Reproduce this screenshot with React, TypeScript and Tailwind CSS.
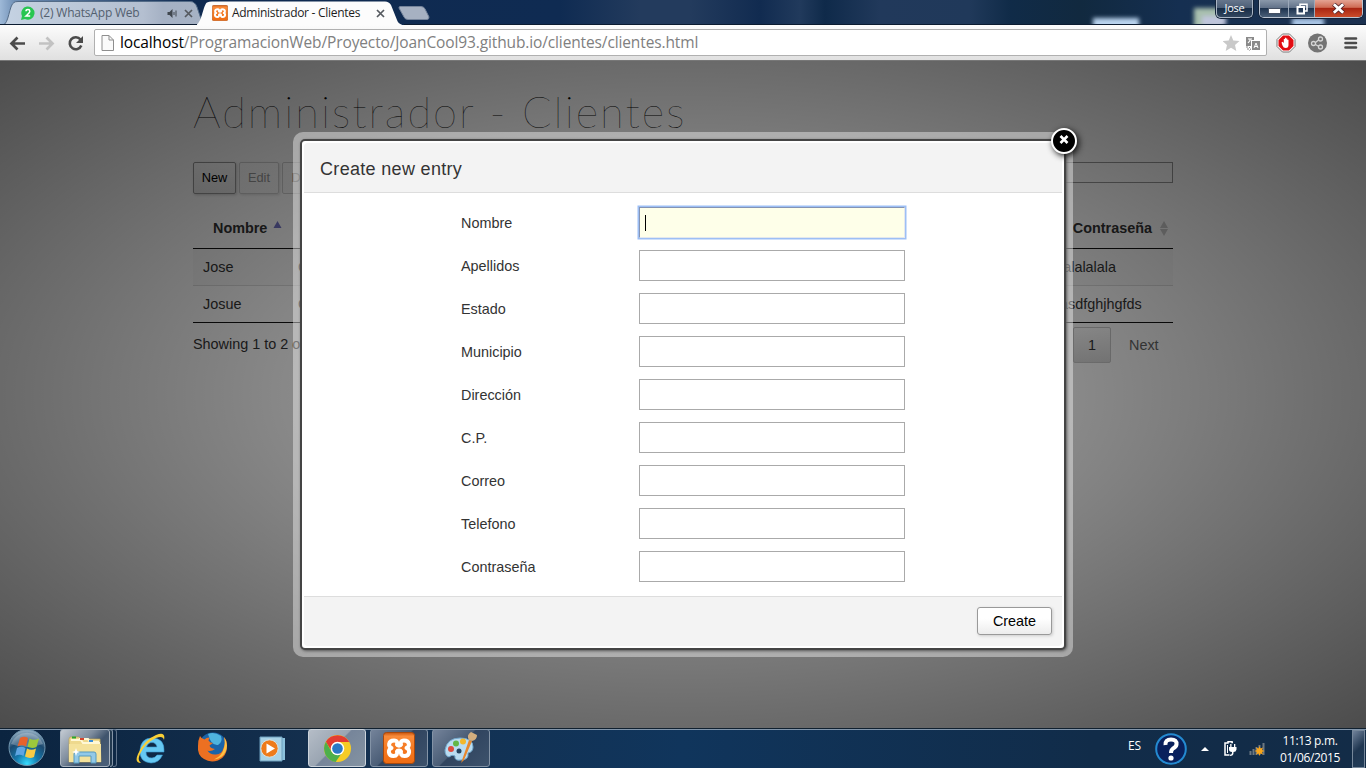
import React from "react";

const fields = ["Nombre", "Apellidos", "Estado", "Municipio", "Dirección", "C.P.", "Correo", "Telefono", "Contraseña"];

function XamppIcon({ className }: { className: string }) {
  return (
    <svg viewBox="0 0 32 32" className={className}>
      <defs>
        <linearGradient id="xo" x1="0" y1="0" x2="0" y2="1">
          <stop offset="0" stopColor="#c9540d" />
          <stop offset=".12" stopColor="#f98b3a" />
          <stop offset=".5" stopColor="#f57a22" />
          <stop offset="1" stopColor="#ee6c13" />
        </linearGradient>
      </defs>
      <rect x=".5" y=".5" width="31" height="31" rx="3" fill="url(#xo)" stroke="#a8480c" />
      <path
        d="M11 8.500C5 8.500 5 15 8.500 16C4.500 17 5 24 10.500 24C14 24 14.500 21.500 14 19.500C14.500 18 17.500 18 18 19.500C17.500 21.500 18 24 21.500 24C27 24 27.500 17 23.500 16C27 15 27 8.500 21 8.500C17.500 8.500 17.500 11 18 12.800C17.500 14 14.500 14 14 12.800C14.500 11 14.500 8.500 11 8.500z"
        fill="none"
        stroke="#fff"
        strokeWidth="4"
        strokeLinejoin="round"
      />
    </svg>
  );
}

function CloseMark() {
  return (
    <svg viewBox="0 0 9 9" className="h-[9px] w-[9px] shrink-0">
      <path d="M1 1l7 7M8 1l-7 7" stroke="#55595f" strokeWidth="1.700" />
    </svg>
  );
}

function TabStrip() {
  return (
    <div className="relative flex h-[25px] w-full shrink-0 overflow-hidden bg-[linear-gradient(90deg,#9eb9d8_0,#6f8fb5_15px,#0f2a50_190px,#0f2b52_560px,#233b5d_640px,#233b5d_690px,#112b50_760px,#213a5c_800px,#0f2a4a_825px,#21395b_880px,#20395a_970px,#102b48_1010px,#11293f_1080px,#152f51_1180px,#1c3150_1366px)]">
      <svg className="absolute inset-0 h-[25px] w-[1366px]" viewBox="0 0 1366 25">
        <defs>
          <filter id="glow" x="-30%" y="-80%" width="160%" height="260%">
            <feGaussianBlur stdDeviation="2.200" />
          </filter>
          <linearGradient id="inactive" x1="0" x2="1">
            <stop offset="0" stopColor="#c5d3e4" />
            <stop offset=".1" stopColor="#c2cfdf" />
            <stop offset=".7" stopColor="#b4bfd0" />
            <stop offset=".8" stopColor="#a5b1c4" />
            <stop offset="1" stopColor="#a6b2c4" />
          </linearGradient>
        </defs>
        <g filter="url(#glow)">
          <rect x="1093" y="18" width="46" height="12" fill="#b9d3ee" />
          <rect x="1194" y="8" width="28" height="20" fill="#a8bfae" />
          <rect x="1202" y="16" width="24" height="10" fill="#bfc5dc" />
          <rect x="1292" y="18" width="32" height="10" fill="#a9c5e5" />
        </g>
        <path d="M3 25C9 24 9 5 14 2.500Q15 1.500 18 1.500H190Q195 1.500 197 7L203 25z" fill="url(#inactive)" stroke="#536b87" />
        <path d="M195 25.500C202 24 203 5 207 2.500Q209 1.500 212 1.500H385Q389 1.500 391 5L397 20Q398 24 404 25.500z" fill="#fcfcfc" />
        <path d="M400 6.500H421Q424 6.500 425 9L429 17Q429 19.500 427 19.500H408Q405 19.500 404 17L399 8Q399 6.500 400 6.500z" fill="#a6b1c2" stroke="#75849b" />
        <path d="M0 24.500H197M404 24.500H1366" stroke="#0c1c31" />
      </svg>
      <div className="relative flex w-[201px] items-center pt-px pl-[21px] text-[12px] text-[#53606f]">
        <svg viewBox="0 0 14 14" className="h-[14px] w-[14px]">
          <path d="M0 14l1-4A6.600 6.600 0 1 1 4 13z" fill="#27c650" />
          <path d="M5 5.200Q5 3.600 7 3.600Q8.800 3.600 8.800 5.200Q8.800 6.500 5 10H9.200" fill="none" stroke="#fff" strokeWidth="1.500" />
        </svg>
        <span className="ml-[5px] w-[127px] whitespace-nowrap tracking-[-0.200px]">(2) WhatsApp Web</span>
        <svg viewBox="0 0 10 9" className="h-[9px] w-[11px]">
          <path d="M0 3h2l3-3v9L2 6H0z" fill="#40474f" />
          <path d="M6.500 3v3M8.500 1.500v6" stroke="#40474f" />
        </svg>
        <span className="ml-[6px] flex"><CloseMark /></span>
      </div>
      <div className="relative flex w-[195px] items-center pt-px pl-[11px] text-[12px] text-[#1c1c1c]">
        <XamppIcon className="h-4 w-4" />
        <span className="ml-1 w-[144px] whitespace-nowrap tracking-[-0.290px]">Administrador - Clientes</span>
        <CloseMark />
      </div>
      <div className="relative ml-auto flex h-[18px] text-white">
        <div className="mr-[6px] flex h-[18px] w-[37px] items-center justify-center rounded-b-[5px] border border-t-0 border-[#aab5c4] bg-[linear-gradient(#66768c_0,#4d5f77_45%,#172c46_50%,#33475f)] text-[11px] font-medium tracking-[-0.200px] shadow-[0_0_0_1px_#13233a]">Jose</div>
        <div className="mr-[3px] flex h-[18px] w-[104px] overflow-hidden rounded-b-[5px] border border-t-0 border-[#bbc4d1] shadow-[0_0_0_1px_#13233a]">
          <div className="flex w-[29px] items-center justify-center border-r border-[#9ba8b9] bg-[linear-gradient(#8a98aa_0,#63738a_45%,#1e334f_50%,#4a5f78)]">
            <div className="mt-1 h-1 w-[11px] bg-white shadow-[0_0_0_1px_#465164]" />
          </div>
          <div className="flex w-[26px] items-center justify-center border-r border-[#9ba8b9] bg-[linear-gradient(#8a98aa_0,#63738a_45%,#1e334f_50%,#4a5f78)]">
            <svg viewBox="0 0 12 12" className="h-3 w-3">
              <path d="M4 3V1.200H11V8H9" fill="none" stroke="#fff" strokeWidth="1.500" />
              <path d="M1.500 4H8V10.500H1.500z" fill="none" stroke="#fff" strokeWidth="2" />
            </svg>
          </div>
          <div className="flex flex-1 items-center justify-center bg-[linear-gradient(#e4a393_0,#cf6c55_43%,#a92612_50%,#c94c2a)]">
            <svg viewBox="0 0 12 10" className="h-[11px] w-[13px]">
              <path d="M1.500 1l9 8M10.500 1l-9 8" stroke="#52252a" strokeWidth="4.200" />
              <path d="M1.700 1l8.600 8M10.300 1L1.700 9" stroke="#fff" strokeWidth="2.600" />
            </svg>
          </div>
        </div>
      </div>
    </div>
  );
}

function Toolbar() {
  return (
    <div className="flex h-9 w-full shrink-0 items-center border-b border-[#777] bg-[linear-gradient(#fcfcfc,#e0e0e0)]">
      <svg viewBox="0 0 94 34" className="h-[34px] w-[94px] shrink-0">
        <path d="M25 17.500H12M17.500 11.500L11.500 17.500L17.500 23.500" fill="none" stroke="#4b4b4b" strokeWidth="2.700" />
        <path d="M39 17.500H52M46.500 11.500L52.500 17.500L46.500 23.500" fill="none" stroke="#c2c2c2" strokeWidth="2.700" />
        <path d="M80.500 13.500A6 6 0 1 0 81.300 19.500" fill="none" stroke="#4b4b4b" strokeWidth="2.600" />
        <path d="M83 10V17H76z" fill="#4b4b4b" />
      </svg>
      <div className="flex h-[27px] w-[1173px] items-center rounded-[2px] border border-[#b0b0b0] bg-white pl-[6px]">
        <svg viewBox="0 0 13 16" className="h-4 w-[13px]">
          <path d="M1 .5H8L12.500 5V15.500H1z" fill="#fafafa" stroke="#8e8e8e" />
          <path d="M8 .5V5H12.500" fill="none" stroke="#8e8e8e" />
        </svg>
        <span className="ml-[6px] whitespace-nowrap pt-px text-[15.500px] tracking-[-0.125px] text-[#808080]"><span className="text-black">localhost</span>/ProgramacionWeb/Proyecto/JoanCool93.github.io/clientes/clientes.html</span>
        <svg viewBox="0 0 38 18" className="mr-[5px] ml-auto h-[18px] w-[38px]">
          <path d="M8 1L10.300 6.400L16.500 7L12 11L13.300 17L8 13.800L2.700 17L4 11L-.5 7L5.700 6.400z" fill="#c9c9c9" />
          <path d="M23 3H31V6H28V12H23z" fill="#8a8a8a" />
          <path d="M25 5h4M27 4.500v2L25 9" stroke="#fff" strokeWidth="1.200" fill="none" />
          <rect x="29" y="7" width="8" height="9" fill="#8a8a8a" />
          <path d="M31 14l2-5l2 5M31.500 12.500h3" stroke="#fff" fill="none" />
          <path d="M24 12v3h3M26 13l2 2l-2 2" stroke="#8a8a8a" strokeDasharray="2 1" fill="none" />
        </svg>
      </div>
      <svg viewBox="0 0 98 34" className="h-[34px] w-[98px] shrink-0">
        <path d="M15.500 8H22.500L28 13.500V20.500L22.500 26H15.500L10 20.500V13.500z" fill="#fff" stroke="#777" />
        <path d="M16 9.500H22L26.500 14V20L22 24.500H16L11.500 20V14z" fill="#e20c12" />
        <path d="M14.500 16.500l1-.8l1.300 1.300V13h1.100v3V11.800h1.200V16v-3.600h1.200V16.500v-2.800h1.200V19q0 3-2.700 3q-2.500 0-3.300-2.500z" fill="#fff" />
        <circle cx="50.500" cy="17" r="9.500" fill="#747474" />
        <g fill="none" stroke="#d6d6d6" strokeWidth="1.300">
          <circle cx="46.500" cy="17.500" r="2" />
          <circle cx="53.500" cy="13" r="2" />
          <circle cx="53.500" cy="21" r="2" />
          <path d="M48.500 16.500l3-2.500M48.500 18.500l3 1.800" />
        </g>
        <path d="M78.500 12.500H89M78.500 17H89M78.500 21.500H89" stroke="#4b4b4b" strokeWidth="2.600" strokeLinecap="round" />
      </svg>
    </div>
  );
}

function Row({ name, last, pass, striped }: { name: string; last: string; pass: string; striped?: boolean }) {
  return (
    <div className={striped ? "flex h-9 items-center bg-[#f9f9f9] pt-px pl-[10px]" : "flex h-9 items-center pt-px pl-[10px]"}>
      <span className="w-[95px]">{name}</span>
      <span className="w-[762px]">{last}</span>
      <span>{pass}</span>
    </div>
  );
}

function ClientsPage() {
  return (
    <div className="mx-auto w-[980px] pt-[23px] text-[14.400px] text-[#333]">
      <h1 className="h-[78px] font-[Lato] text-[43.500px] leading-[54px] font-thin whitespace-nowrap tracking-[2px] text-black">Administrador - Clientes</h1>
      <div className="flex h-8 items-start justify-between">
        <div className="flex gap-[3px] text-[12.800px]">
          <button className="h-8 w-[43px] rounded-[2px] border border-[#999] bg-[linear-gradient(#fff,#e9e9e9)] pb-px text-black shadow-[1px_1px_3px_#ccc]">New</button>
          <button className="h-8 w-[40px] rounded-[2px] border border-[#d0d0d0] bg-[linear-gradient(#fff,#f9f9f9)] pb-px text-[#999] shadow-[1px_1px_3px_#ddd]">Edit</button>
          <button className="h-8 w-[56px] rounded-[2px] border border-[#d0d0d0] bg-[linear-gradient(#fff,#f9f9f9)] pb-px text-[#999]">Delete</button>
        </div>
        <div className="h-[21px] w-[173px] border border-[#999]" />
      </div>
      <div className="mt-[14px] flex h-[41px] items-center border-b border-[#111] pt-px pl-5 font-bold">
        <span>Nombre</span>
        <svg viewBox="0 0 8 7" className="mb-[8px] ml-[6px] h-[7px] w-[9px]"><path d="M4 0l4 7H0z" fill="#7777c9" /></svg>
        <span className="ml-auto">Contraseña</span>
        <svg viewBox="0 0 8 15" className="mr-[5px] ml-[8px] h-[15px] w-2"><path d="M4 0l4 7H0zM0 8h8l-4 7z" fill="#ccc" /></svg>
      </div>
      <div className="border-b border-[#111]">
        <Row name="Jose" last="Garcia" pass="lalalalala" striped />
        <div className="border-t border-[#ddd]"><Row name="Josue" last="Gomez" pass="asdfghjhgfds" /></div>
      </div>
      <div className="flex justify-between pt-1">
        <span className="pt-[7px]">Showing 1 to 2 of 2 entries</span>
        <div className="flex h-9">
          <span className="flex w-[38px] items-center justify-center rounded-[2px] border border-[#cacaca] bg-[linear-gradient(#fff,#dcdcdc)] pt-px">1</span>
          <span className="flex w-[62px] items-center pt-px pl-[18px] text-[#666]">Next</span>
        </div>
      </div>
    </div>
  );
}

function EntryDialog() {
  return (
    <div className="absolute top-[71px] left-[293px] w-[780px] rounded-[10px] bg-white/40 p-[7px]">
      <div className="relative flex h-[511px] flex-col rounded-[5px] border-2 border-[#444] bg-white p-[2px] shadow-[1px_1px_3px_#555]">
        <header className="flex h-[50px] shrink-0 items-center rounded-t-[4px] border-b border-[#ddd] bg-[#f3f3f3] pt-[3px] pl-[16px] text-[18px] tracking-[0.320px] text-[#333]">Create new entry</header>
        <div className="flex flex-1 flex-col gap-3 pt-[14px] pl-[157px]">
          {fields.map((f, i) => (
            <label key={f} className="flex h-[31px] items-center text-[14.400px] text-[#333]">
              <span className="w-[178px] pt-[2px]">{f}</span>
              {i === 0 ? (
                <span className="flex h-[31px] w-[266px] items-center border border-[#e4e8ec] border-t-[#8494b4] border-l-[#8494b4] bg-[#feffe9] pl-[5px] shadow-[0_0_0_1.500px_#9dbff5]"><i className="h-[16px] w-px bg-black" /></span>
              ) : (
                <span className="h-[31px] w-[266px] border border-[#aaa] bg-white" />
              )}
            </label>
          ))}
        </div>
        <footer className="flex h-[50px] shrink-0 items-start justify-end rounded-b-[4px] border-t border-[#ddd] bg-[#f3f3f3] pt-[10px] pr-[10px]">
          <button className="h-7 w-[75px] rounded-[3px] border border-[#999] bg-[linear-gradient(#fff_40%,#ececec)] pt-px text-[14.400px] text-black shadow-[1px_1px_3px_#ccc]">Create</button>
        </footer>
        <div className="absolute top-[-13px] right-[-13px] flex h-[26px] w-[26px] justify-center rounded-full border-2 border-white bg-black pt-[5px] shadow-[2px_2px_6px_#111]">
          <svg viewBox="0 0 10 9" className="h-[9px] w-[10px]"><path d="M1.500 1l7 7M8.500 1l-7 7" stroke="#fff" strokeWidth="2.600" /></svg>
        </div>
      </div>
    </div>
  );
}

function Slot({ children, bright }: { children: React.ReactNode; bright?: boolean }) {
  return (
    <div className={bright
      ? "flex h-[38px] w-[58px] items-center justify-center rounded-[3px] border border-[#cbd3db] bg-[linear-gradient(135deg,#b5bdc7_0,#9aa5b2_45%,#76859a_47%,#8493a2)]"
      : "flex h-[38px] w-[58px] items-center justify-center rounded-[3px] border border-[#8393a6] bg-[linear-gradient(135deg,#74839a_0,#4a5d76_45%,#30445f_47%,#3d526c)]"}>
      {children}
    </div>
  );
}

function StartOrb() {
  return (
    <svg viewBox="0 0 38 38" className="ml-2 h-[38px] w-[38px]">
      <defs>
        <radialGradient id="orb" cx=".5" cy=".95" r=".9"><stop offset="0" stopColor="#36dcff" /><stop offset=".35" stopColor="#1479ad" /><stop offset=".7" stopColor="#1d4a70" /><stop offset="1" stopColor="#8aa7bd" /></radialGradient>
      </defs>
      <circle cx="19" cy="18.500" r="18" fill="url(#orb)" stroke="#6f94ad" />
      <path d="M3 15A17 17 0 0 1 35 15Q19 21 3 15z" fill="#fff" opacity=".25" />
      <path d="M12 9Q16 6.500 20 9L18 17.500Q14 15 9.500 17.500z" fill="#e7622c" />
      <path d="M21.500 9.500Q26 12 31 9.500L28.500 18Q24 20 19.500 17.800z" fill="#9cc83c" />
      <path d="M9 19Q13 16.500 17.500 19L15.500 27Q11.500 24.500 7 27z" fill="#5fa5e3" />
      <path d="M19 19.500Q23.500 22 28 19.500L26 28Q21.500 30 17 27.500z" fill="#f8cb45" />
    </svg>
  );
}

function Taskbar() {
  return (
    <div className="flex h-10 w-full shrink-0 border-t border-[#10202f] bg-[linear-gradient(90deg,#0b2440,#14304f_25%,#10355c_50%,#112c49_80%,#132c47)] text-white shadow-[inset_0_1px_0_#8195aa]">
      <StartOrb />
      <div className="ml-[14px] flex">
        <div className="flex h-[38px] w-[50px] items-center justify-center rounded-[3px] border border-[#a9b4c0] bg-[linear-gradient(135deg,#c4cbd3_0,#7f8d9e_40%,#40546d_60%,#4b6079)]">
          <svg viewBox="0 0 34 30" className="mt-[2px] h-[30px] w-[34px]">
            <path d="M1 5l1-2h9l2 2h19l1 23H1z" fill="#eed98d" stroke="#b9a257" strokeWidth=".7" />
            <path d="M3 6h10l2 3h17M11 5h9l2 3h9" stroke="#fff8d5" strokeWidth="2" fill="none" />
            <path d="M4 3.500h4" stroke="#2aa72d" strokeWidth="2" /><path d="M12 5h4" stroke="#d5442c" strokeWidth="2" /><path d="M21 7h4" stroke="#3a8ed8" strokeWidth="2" />
            <path d="M1 10H33V28H1z" fill="#f4e29b" />
            <path d="M6 29V20Q6 18 8 18H26Q28 18 28 20V29H23V22H11V29z" fill="#92c9e8" stroke="#569abd" />
            <path d="M8 14l1 3l3 1l-3 1l-1 3l-1-3l-3-1l3-1z" fill="#fff" />
          </svg>
        </div>
        <div className="h-[38px] w-[3px] rounded-r-[3px] border-y border-r border-[#8494a6] bg-[#22394f]" />
        <div className="h-[38px] w-[4px] rounded-r-[3px] border-y border-r border-[#60738a]" />
      </div>
      <svg viewBox="0 0 34 34" className="mt-[3px] ml-[17px] h-[34px] w-[34px]">
        <path d="M28.500 23Q25 31 17 31Q5 30 6 18Q7 6 18 6Q31 6 30 20H12Q12 26 18 26Q21 26 23 23zM12.500 15H23Q22 10.500 18 10.500Q14 10.500 12.500 15z" fill="#66c8f2" stroke="#3b97cf" strokeWidth=".6" />
        <path d="M7 31Q0 31 4 22Q10 8 22 3Q32-1 30 8Q29 3 22 6Q11 11 6 22Q3 29 7 31z" fill="#f9cf36" />
      </svg>
      <svg viewBox="0 0 32 32" className="mt-[2px] ml-[28px] h-8 w-8">
        <circle cx="17" cy="15.500" r="14" fill="#1a64aa" />
        <path d="M12 3Q18 0 25 5Q27 11 22 14Q15 15 12 3z" fill="#4fb4df" />
        <path d="M4 5Q2 9 2 15Q1 24 8 28Q14 32 22 29.500Q31 26 31 15Q31 9 28 6Q30 12 27.500 17Q26 23 20 23.500Q14 24 11.500 19.500Q15 21 19 18Q14 17 13.500 14.500L17 12Q14 12 12.500 9.500L13.500 6.500Q10 6.500 8.500 8.500Q5.500 8 4 5z" fill="#ec7022" />
        <path d="M28 6Q33 13 29.500 21Q26 28 18 28.500Q26 25 28 17Q29.500 12 28 6z" fill="#fdc343" />
      </svg>
      <svg viewBox="0 0 28 28" className="mt-[6px] ml-[30px] h-7 w-7">
        <path d="M5 3L27 3V25H5z" fill="#8cc1dc" />
        <path d="M2 2H24V26H2z" fill="#a9d3e6" stroke="#6c9fbd" />
        <circle cx="11.500" cy="13.500" r="8.700" fill="#ee7b1a" stroke="#d6e5e9" />
        <path d="M8.500 8.500L17 13.500L8.500 18.500z" fill="#fff" />
      </svg>
      <div className="ml-[22px] flex gap-1">
        <Slot bright>
          <svg viewBox="0 0 30 30" className="h-[29px] w-[29px]">
            <circle cx="15" cy="15" r="14" fill="#f6cc25" />
            <path d="M3 8A14 14 0 0 1 27.200 8.300H15A7 7 0 0 0 8.800 17.500z" fill="#e23c32" />
            <path d="M3 8A14 14 0 0 0 13 28.900L20 19A7 7 0 0 1 9 18.500z" fill="#4daf4b" />
            <circle cx="15" cy="15" r="7" fill="#fff" /><circle cx="15" cy="15" r="5.500" fill="#2a79c6" />
          </svg>
        </Slot>
        <Slot><XamppIcon className="h-8 w-8" /></Slot>
        <Slot>
          <svg viewBox="0 0 34 32" className="h-8 w-[34px]">
            <path d="M1 18Q3 6 16 6Q29 6 29 15Q29 20 24 21Q25 28 17 28Q10 29 11 24Q8 22 5 25Q1 24 1 18z" fill="#b9dcf1" stroke="#73a8cc" />
            <circle cx="7" cy="17" r="3" fill="#de4b3f" /><circle cx="12" cy="11.500" r="3" fill="#63b647" /><circle cx="19" cy="9.500" r="3" fill="#f2b72b" /><circle cx="15" cy="19" r="2.500" fill="#24425f" />
            <path d="M17 31L25 8L28 9L20 28z" fill="#e7862c" />
            <path d="M25 8Q22 3 27 0L33 3Q33 8 28 9z" fill="#d2ad7e" />
          </svg>
        </Slot>
      </div>
      <div className="ml-auto flex items-center text-[12px]">
        <span className="mb-[5px] w-[27px] text-[12px] tracking-[-0.200px]">ES</span>
        <svg viewBox="0 0 32 32" className="h-8 w-8">
          <circle cx="16" cy="16" r="14.800" fill="#09205c" stroke="#248ad1" strokeWidth="2" />
          <path d="M10.500 12Q10 6.500 16 6.500Q22 6.500 21.500 11.500Q21 14 18 15.500Q16 17 16 20" fill="none" stroke="#fff" strokeWidth="4" />
          <circle cx="16" cy="25" r="2.600" fill="#fff" />
        </svg>
        <svg viewBox="0 0 8 4" className="ml-[14px] h-1 w-2"><path d="M4 0l4 4H0z" fill="#fff" /></svg>
        <svg viewBox="0 0 14 16" className="ml-[14px] h-4 w-[14px]">
          <path d="M10 1.500H9V.8H5V2H2V14H6.500" fill="none" stroke="#fff" strokeWidth="1.500" />
          <path d="M4.500 4V12" stroke="#fff" />
          <path d="M6 6H13.500V8.500Q13 11 10.500 11V12Q10.500 15 7 15V13.800Q9 13.800 9 12V11Q6 10.500 6 8.500zM7.200 3h1.300v3H7.200zM11 3h1.300v3H11z" fill="#fff" />
        </svg>
        <svg viewBox="0 0 16 14" className="ml-[12px] h-[14px] w-4">
          <path d="M1.500 9v4M4.500 7v6M7.500 5v8M10.500 3v10M14.500 1v12" stroke="#6d7882" strokeWidth="2" />
          <path d="M10.500 4l1 2.500L14 5.500l-1 2.500L15.500 9L13 10l1 2.500l-2.500-1l-1 2.500l-1-2.500L7 12.500L8 10L5.500 9L8 8L7 5.500l2.500 1z" fill="#f9a51a" />
        </svg>
        <div className="ml-[12px] w-[66px] pt-px text-center leading-[17px] tracking-[-0.350px] whitespace-nowrap"><div>11:13 p.m.</div><div>01/06/2015</div></div>
        <div className="ml-[9px] h-[38px] w-[13px] border border-[#76879a] bg-[linear-gradient(135deg,#71829a,#1f3650_50%,#223c58)]" />
        <div className="w-px" />
      </div>
    </div>
  );
}

export default function App() {
  return (
    <div className="flex h-[768px] w-[1366px] flex-col overflow-hidden bg-white font-['Open_Sans',sans-serif]">
      <TabStrip />
      <Toolbar />
      <main className="relative h-[667px] w-full shrink-0 overflow-hidden font-['Liberation_Sans',sans-serif]">
        <ClientsPage />
        <div className="absolute inset-0 bg-[radial-gradient(ellipse_farthest-corner_at_center,rgba(0,0,0,0.3)_0%,rgba(0,0,0,0.7)_100%)]" />
        <EntryDialog />
      </main>
      <Taskbar />
    </div>
  );
}
